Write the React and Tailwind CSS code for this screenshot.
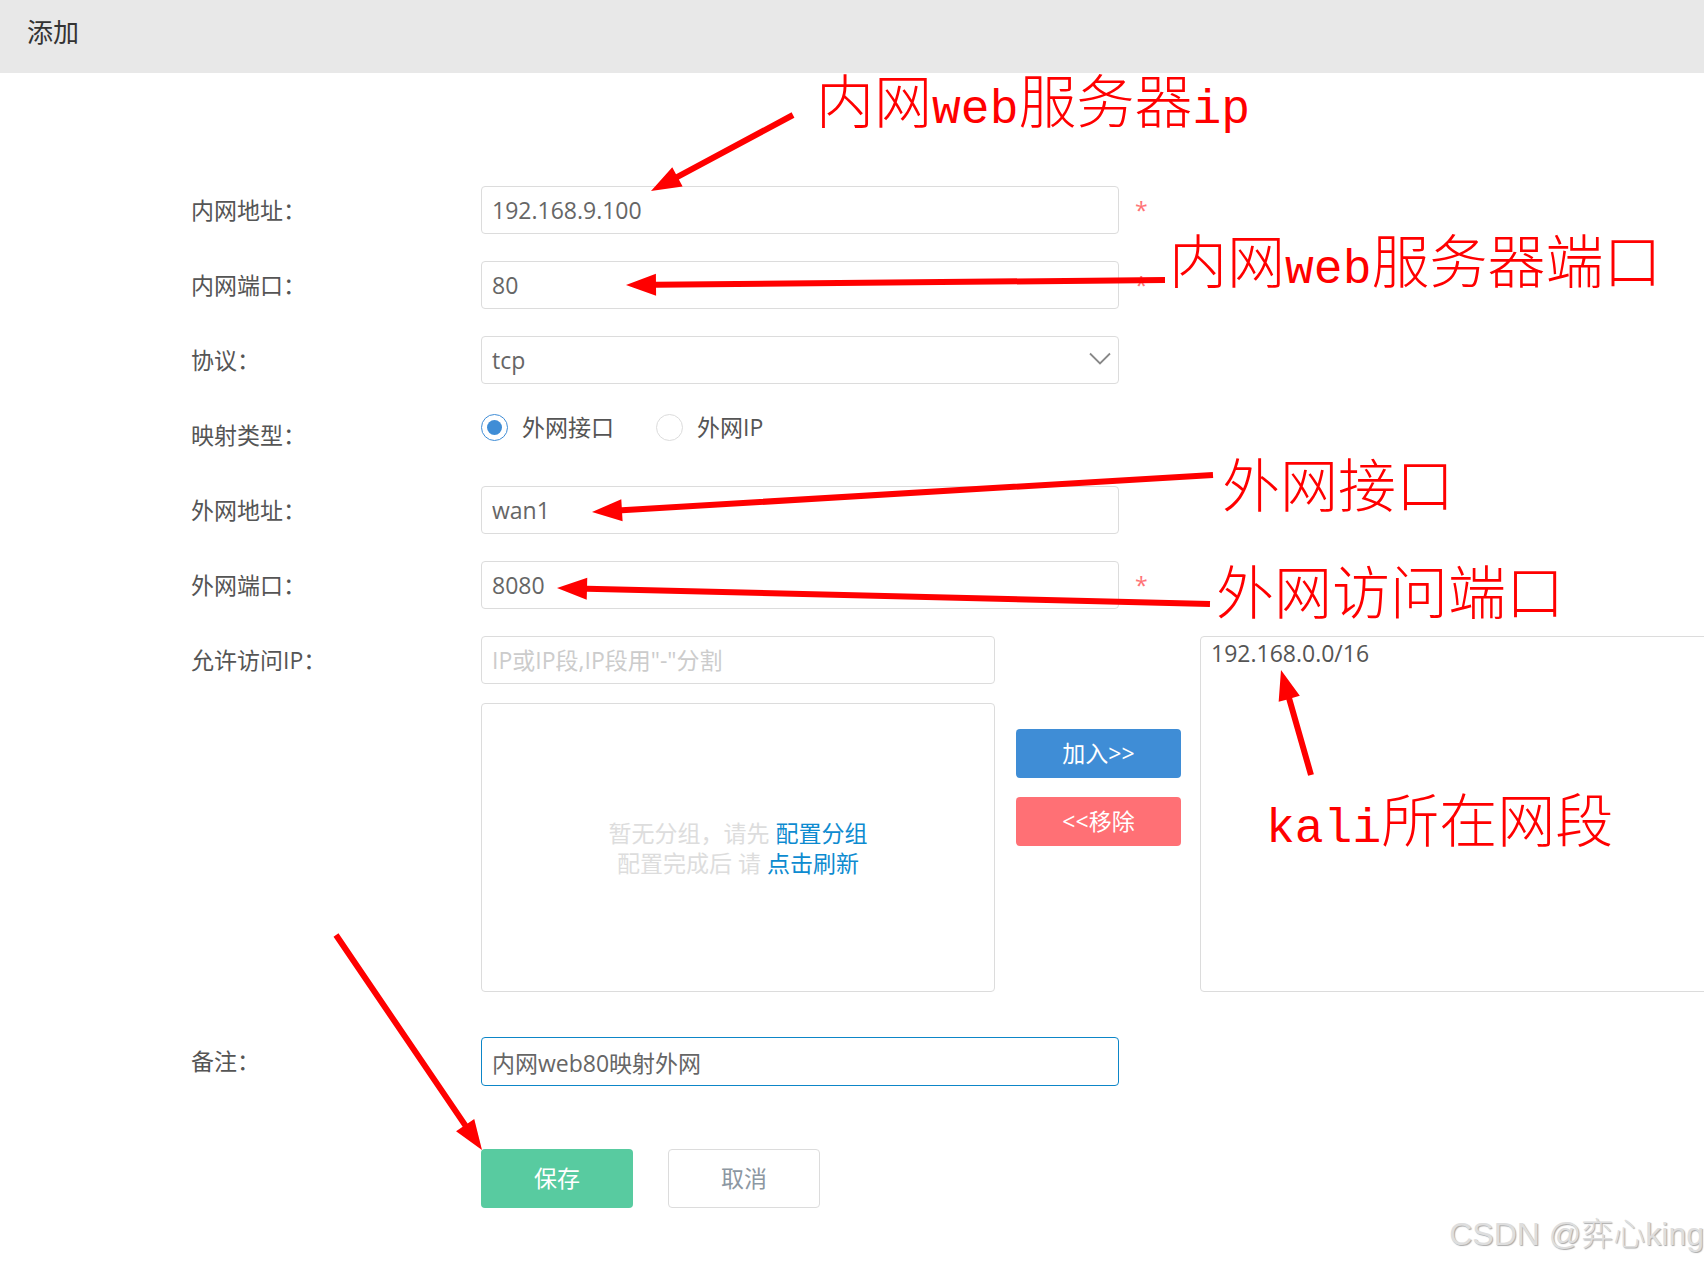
import React from 'react';
import clsx from 'clsx';

const inputClass =
  'block h-12 rounded border border-[#dcdcdc] bg-white px-2.5 text-[23px] text-[#666] outline-none placeholder:text-[#ccc] placeholder:opacity-100';

const arrows = [
  { from: [793, 115], to: [651, 191] },
  { from: [1165, 280], to: [626, 285] },
  { from: [1213, 475], to: [592, 512] },
  { from: [1210, 604], to: [557, 588] },
  { from: [1311, 775], to: [1281, 670] },
  { from: [336, 935], to: [482, 1150] },
];

const Row = ({ id, label, required, children }) => (
  <div className="flex items-start">
    <label htmlFor={id} className="w-[290px] shrink-0 leading-[48px] text-[#555]">
      {label}
    </label>
    {children}
    {required && <span className="ml-4 leading-[48px] text-[#ff7377]">*</span>}
  </div>
);

const Radio = ({ id, label, defaultChecked }) => (
  <div className="flex items-center gap-3.5">
    <input
      type="radio"
      name="mapType"
      id={id}
      defaultChecked={defaultChecked}
      className="size-[27px] appearance-none rounded-full border border-[#dcdcdc] bg-white bg-clip-content p-[5px] checked:border-[#3f8dd6] checked:bg-[#3f8dd6]"
    />
    <label htmlFor={id} className="text-[#555]">
      {label}
    </label>
  </div>
);

const Arrow = ({ from, to }) => {
  const dx = to[0] - from[0];
  const dy = to[1] - from[1];
  const len = Math.hypot(dx, dy);
  const angle = (Math.atan2(dy, dx) * 180) / Math.PI;

  return (
    <path
      transform={`translate(${from[0]} ${from[1]}) rotate(${angle})`}
      d={`M0 -3H${len - 30}V-11L${len} 0L${len - 30} 11V3H0Z`}
    />
  );
};

const Note = ({ className, children }) => (
  <p
    className={clsx(
      'absolute whitespace-nowrap font-[Liberation_Mono,Noto_Sans_CJK_SC,monospace] text-[58px] font-light leading-[60px] text-[#ff0000]',
      className
    )}
  >
    {children}
  </p>
);

// latin part of a note, half as wide as the chinese characters
const Latin = ({ children }) => <span className="text-[48px]">{children}</span>;

const Annotations = () => (
  <div className="pointer-events-none absolute left-0 top-0">
    <svg width="1704" height="1264" fill="#ff0000" aria-hidden="true">
      {arrows.map((arrow, i) => (
        <Arrow key={i} {...arrow} />
      ))}
    </svg>
    <Note className="left-[816px] top-[78px]">
      内网<Latin>web</Latin>服务器<Latin>ip</Latin>
    </Note>
    <Note className="left-[1169px] top-[238px]">
      内网<Latin>web</Latin>服务器端口
    </Note>
    <Note className="left-[1222px] top-[462px]">外网接口</Note>
    <Note className="left-[1216px] top-[569px]">外网访问端口</Note>
    <Note className="left-[1266px] top-[797px]">
      <Latin>kali</Latin>所在网段
    </Note>
  </div>
);

const App = () => {
  return (
    <div className="relative min-h-screen overflow-hidden bg-white font-[Open_Sans,Noto_Sans_CJK_SC,sans-serif] text-[23px]">
      <header className="h-[73px] bg-[#e8e8e8] px-[27px]">
        <h1 className="text-[26px] leading-[64px] text-[#333]">添加</h1>
      </header>

      <form className="pl-[191px] pt-[113px]" onSubmit={(e) => e.preventDefault()}>
        <div className="flex flex-col gap-[27px]">
          <Row id="lanIp" label="内网地址：" required>
            <input id="lanIp" defaultValue="192.168.9.100" className={clsx(inputClass, 'w-[638px]')} />
          </Row>
          <Row id="lanPort" label="内网端口：" required>
            <input id="lanPort" defaultValue="80" className={clsx(inputClass, 'w-[638px]')} />
          </Row>
          <Row id="protocol" label="协议：">
            <div className="relative">
              <select
                id="protocol"
                defaultValue="tcp"
                className={clsx(inputClass, 'w-[638px] appearance-none')}
              >
                <option value="tcp">tcp</option>
                <option value="udp">udp</option>
              </select>
              <svg
                className="pointer-events-none absolute right-2 top-4"
                width="22"
                height="13"
                viewBox="0 0 22 13"
                fill="none"
                stroke="#888"
                strokeWidth="1.8"
                aria-hidden="true"
              >
                <path d="M1 1.5L11 11.5L21 1.5" />
              </svg>
            </div>
          </Row>
          <Row id="mapInterface" label="映射类型：">
            <div className="flex h-[33px] items-center gap-[42px]">
              <Radio id="mapInterface" label="外网接口" defaultChecked />
              <Radio id="mapIp" label="外网IP" />
            </div>
          </Row>
          <Row id="wanIp" label="外网地址：">
            <input id="wanIp" defaultValue="wan1" className={clsx(inputClass, 'w-[638px]')} />
          </Row>
          <Row id="wanPort" label="外网端口：" required>
            <input id="wanPort" defaultValue="8080" className={clsx(inputClass, 'w-[638px]')} />
          </Row>
          <Row id="allowIp" label="允许访问IP：">
            <div className="flex h-[356px] shrink-0">
              <div className="flex w-[514px] flex-col gap-[19px]">
                <input
                  id="allowIp"
                  placeholder={'IP或IP段,IP段用"-"分割'}
                  className={clsx(inputClass, 'w-full')}
                />
                <div className="flex flex-1 flex-col items-center justify-center rounded border border-[#dcdcdc] leading-[30px] text-[#ddd]">
                  <p>
                    暂无分组，请先 <a href="#group" className="text-[#0d8bd0]">配置分组</a>
                  </p>
                  <p>
                    配置完成后 请 <a href="#refresh" className="text-[#0d8bd0]">点击刷新</a>
                  </p>
                </div>
              </div>
              <div className="ml-[21px] mr-[19px] mt-[93px] flex w-[165px] flex-col gap-[19px] text-white">
                <button type="button" className="h-[49px] rounded bg-[#3f8dd6]">
                  加入&gt;&gt;
                </button>
                <button type="button" className="h-[49px] rounded bg-[#ff7075]">
                  &lt;&lt;移除
                </button>
              </div>
              <select
                multiple
                aria-label="允许访问IP列表"
                className="w-[514px] rounded border border-[#dcdcdc] bg-white px-2.5 text-[#555] outline-none"
              >
                <option className="p-0 leading-[30px]">192.168.0.0/16</option>
              </select>
            </div>
          </Row>
        </div>

        <div className="mt-[45px]">
          <Row id="remark" label="备注：">
            <input
              id="remark"
              defaultValue="内网web80映射外网"
              className="block h-[49px] w-[638px] rounded border border-[#0d86c8] bg-white px-2.5 text-[23px] text-[#666] outline-none"
            />
          </Row>
        </div>

        <div className="ml-[290px] mt-[63px] flex gap-[35px]">
          <button type="submit" className="h-[59px] w-[152px] rounded bg-[#58cba0] text-white">
            保存
          </button>
          <button
            type="button"
            className="h-[59px] w-[152px] rounded border border-[#dcdcdc] bg-white text-[#8c97a2]"
          >
            取消
          </button>
        </div>
      </form>

      <Annotations />
      <p className="absolute bottom-2 right-0 whitespace-nowrap font-[Liberation_Sans,Noto_Sans_CJK_SC,sans-serif] text-[32px] font-light leading-[44px] text-[#dedede] [text-shadow:1px_1px_1px_#aaa]">
        CSDN @弈心king
      </p>
    </div>
  );
};

export default App;
